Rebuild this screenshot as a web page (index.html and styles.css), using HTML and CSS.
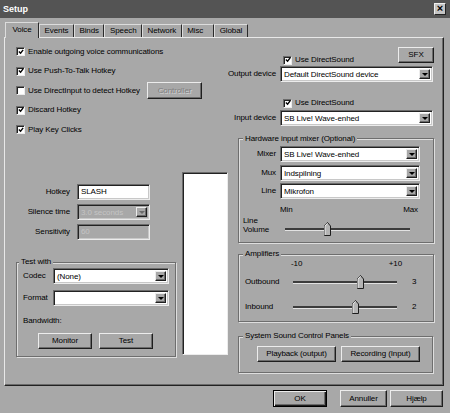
FILE: index.html
```html
<!DOCTYPE html>
<html lang="en">
<head>
    <meta charset="UTF-8">
    <title>Setup</title>
    <link rel="stylesheet" href="styles.css">
</head>
<body>
<div class="window">
    <div class="titlebar">
        <span class="title">Setup</span>
        <span class="close-btn">×</span>
    </div>

    <div class="tabs">
        <span class="tab active">Voice</span>
        <span class="tab">Events</span>
        <span class="tab">Binds</span>
        <span class="tab">Speech</span>
        <span class="tab">Network</span>
        <span class="tab misc">Misc</span>
        <span class="tab">Global</span>
    </div>

    <div class="panel">
        <!-- left side: options, hotkey, test -->
        <div class="col-left">
            <div class="check-row"><span class="cb"><svg class="tick" viewBox="0 0 7 7"><path d="M1 3l2 2 3-4"/></svg></span>Enable outgoing voice communications</div>
            <div class="check-row"><span class="cb"><svg class="tick" viewBox="0 0 7 7"><path d="M1 3l2 2 3-4"/></svg></span>Use Push-To-Talk Hotkey</div>
            <div class="check-row"><span class="cb"></span>Use DirectInput to detect Hotkey<span class="btn disabled controller">Controller</span></div>
            <div class="check-row"><span class="cb"><svg class="tick" viewBox="0 0 7 7"><path d="M1 3l2 2 3-4"/></svg></span>Discard Hotkey</div>
            <div class="check-row"><span class="cb"><svg class="tick" viewBox="0 0 7 7"><path d="M1 3l2 2 3-4"/></svg></span>Play Key Clicks</div>

            <div class="lower">
                <div class="lower-inner">
                    <div class="form-grid">
                        <span class="lbl">Hotkey</span>
                        <span class="edit">SLASH</span>
                        <span class="lbl">Silence time</span>
                        <span class="select disabled"><span class="val">3.0 seconds</span><span class="drop"></span></span>
                        <span class="lbl">Sensitivity</span>
                        <span class="edit disabled">60</span>
                    </div>

                    <fieldset class="group test-group">
                        <legend>Test with</legend>
                        <div class="codec-grid">
                            <span>Codec</span>
                            <span class="select"><span class="val">(None)</span><span class="drop"></span></span>
                            <span>Format</span>
                            <span class="select"><span class="val"></span><span class="drop"></span></span>
                        </div>
                        <div class="bandwidth">Bandwidth:</div>
                        <div class="btn-row">
                            <span class="btn">Monitor</span>
                            <span class="btn">Test</span>
                        </div>
                    </fieldset>
                </div>
                <div class="whitebox"></div>
            </div>
        </div>

        <!-- right side: devices and mixers -->
        <div class="col-right">
            <div class="device-grid">
                <span></span>
                <div class="sfx-row">
                    <span class="check-inline"><span class="cb"><svg class="tick" viewBox="0 0 7 7"><path d="M1 3l2 2 3-4"/></svg></span>Use DirectSound</span>
                    <span class="btn sfx">SFX</span>
                </div>
                <span class="lbl">Output device</span>
                <span class="select"><span class="val">Default DirectSound device</span><span class="drop"></span></span>
                <span></span>
                <span class="check-inline second"><span class="cb"><svg class="tick" viewBox="0 0 7 7"><path d="M1 3l2 2 3-4"/></svg></span>Use DirectSound</span>
                <span class="lbl input-lbl">Input device</span>
                <span class="select input-sel"><span class="val">SB Live! Wave-enhed</span><span class="drop"></span></span>
            </div>

            <fieldset class="group mixer-group">
                <legend>Hardware input mixer (Optional)</legend>
                <div class="mixer-grid">
                    <span class="lbl">Mixer</span>
                    <span class="select"><span class="val">SB Live! Wave-enhed</span><span class="drop"></span></span>
                    <span class="lbl">Mux</span>
                    <span class="select"><span class="val">Indspilning</span><span class="drop"></span></span>
                    <span class="lbl">Line</span>
                    <span class="select"><span class="val">Mikrofon</span><span class="drop"></span></span>
                </div>
                <div class="minmax"><span>Min</span><span>Max</span></div>
                <div class="volume-row">
                    <span class="volume-lbl">Line<br>Volume</span>
                    <div class="slider line-slider">
                        <div class="track"></div>
                        <svg class="thumb" style="left: 34%" viewBox="0 0 7 14"><path class="thumb-body" d="M0.5 13.5V4L3.5 0.5L6.5 4V13.5Z"/><path class="thumb-hi" d="M1 13V4.2L3.5 1.2"/></svg>
                    </div>
                </div>
            </fieldset>

            <fieldset class="group amp-group">
                <legend>Amplifiers</legend>
                <div class="scale"><span>-10</span><span>+10</span></div>
                <div class="amp-row">
                    <span class="amp-lbl">Outbound</span>
                    <div class="slider amp-slider">
                        <div class="track"></div>
                        <svg class="thumb" style="left: 65%" viewBox="0 0 7 14"><path class="thumb-body" d="M0.5 13.5V4L3.5 0.5L6.5 4V13.5Z"/><path class="thumb-hi" d="M1 13V4.2L3.5 1.2"/></svg>
                    </div>
                    <span class="amp-val">3</span>
                </div>
                <div class="amp-row inbound">
                    <span class="amp-lbl">Inbound</span>
                    <div class="slider amp-slider">
                        <div class="track"></div>
                        <svg class="thumb" style="left: 60%" viewBox="0 0 7 14"><path class="thumb-body" d="M0.5 13.5V4L3.5 0.5L6.5 4V13.5Z"/><path class="thumb-hi" d="M1 13V4.2L3.5 1.2"/></svg>
                    </div>
                    <span class="amp-val">2</span>
                </div>
            </fieldset>

            <fieldset class="group sys-group">
                <legend>System Sound Control Panels</legend>
                <div class="sys-buttons">
                    <span class="btn">Playback (output)</span>
                    <span class="btn">Recording (Input)</span>
                </div>
            </fieldset>
        </div>
    </div>

    <div class="footer">
        <span class="btn default">OK</span>
        <span class="btn cancel">Annuller</span>
        <span class="btn help">Hjælp</span>
    </div>
</div>
</body>
</html>
```

FILE: styles.css
```css
* {
    box-sizing: border-box;
}

body {
    margin: 0;
    background: #a8a8a8;
    font-family: "Liberation Sans", Arial, sans-serif;
    font-size: 8px;
    letter-spacing: -0.1px;
    line-height: 10px;
    color: #000;
}

.window {
    width: 450px;
    height: 413px;
    background: #a8a8a8;
    display: flex;
    flex-direction: column;
    overflow: hidden;
}

/* title bar */
.titlebar {
    height: 18px;
    flex: none;
    background: #545454;
    display: flex;
    align-items: center;
    justify-content: space-between;
    padding: 0 4px 0 3px;
}

.title {
    color: #fff;
    font-weight: bold;
    font-size: 9px;
    letter-spacing: 0;
}

.close-btn {
    width: 12px;
    height: 12px;
    background: #c4c4c4;
    border: 1px solid;
    border-color: #f0f0f0 #222 #222 #f0f0f0;
    font-weight: bold;
    font-size: 11px;
    line-height: 9px;
    text-align: center;
    letter-spacing: 0;
}

/* tabs */
.tabs {
    display: flex;
    align-items: flex-end;
    height: 15px;
    margin-top: 4px;
    padding-left: 5px;
    flex: none;
}

.tab {
    height: 13px;
    padding: 0 4.5px;
    border: 1px solid;
    border-color: #dcdcdc #2a2a2a transparent #dcdcdc;
    border-bottom: none;
    line-height: 12px;
    white-space: nowrap;
}

.tab.active {
    height: 16px;
    padding: 0 6.5px;
    margin-bottom: -1px;
    background: #a8a8a8;
    position: relative;
    z-index: 1;
    line-height: 13px;
}

.tab.misc {
    padding-right: 10px;
}

/* main panel */
.panel {
    flex: none;
    height: 349px;
    margin: 0 6px 0 4px;
    border: 1px solid;
    border-color: #e8e8e8 #222 #222 #e8e8e8;
    box-shadow: inset -1px -1px 0 #6b6b6b;
    display: flex;
}

.col-left {
    width: 228px;
    flex: none;
    padding-top: 4px;
}

.col-right {
    flex: 1;
    padding-top: 9px;
}

/* checkboxes */
.check-row {
    height: 19.5px;
    display: flex;
    align-items: center;
    padding-left: 11px;
    white-space: nowrap;
}

.cb {
    width: 9px;
    height: 9px;
    flex: none;
    margin-right: 3px;
    background: #fff;
    border: 1px solid;
    border-color: #6b6b6b #ececec #ececec #6b6b6b;
    box-shadow: inset 1px 1px 0 #222;
    display: flex;
    align-items: center;
    justify-content: center;
}

.tick {
    width: 6px;
    height: 6px;
    fill: none;
    stroke: #000;
    stroke-width: 1.6;
}

.check-inline {
    display: flex;
    align-items: center;
    height: 10px;
    margin-left: 3px;
    white-space: nowrap;
}

/* buttons */
.btn {
    display: flex;
    align-items: center;
    justify-content: center;
    height: 17px;
    background: #a8a8a8;
    border: 1px solid;
    border-color: #ececec #1e1e1e #1e1e1e #ececec;
    box-shadow: inset -1px -1px 0 #6b6b6b;
    white-space: nowrap;
}

.btn.disabled {
    color: #7e7e7e;
    text-shadow: 1px 1px 0 #d4d4d4;
}

.controller {
    width: 55px;
    margin-left: 7px;
}

/* fields */
.edit,
.select {
    height: 16px;
    background: #fff;
    border: 1px solid;
    border-color: #6b6b6b #ececec #ececec #6b6b6b;
    box-shadow: inset 1px 1px 0 #222, inset -1px -1px 0 #c8c8c8;
    padding: 2px 2px 0 3px;
    white-space: nowrap;
    overflow: hidden;
}

.select {
    display: flex;
    padding: 2px 2px 2px 2px;
}

.select .val {
    flex: 1;
    padding-left: 1px;
    line-height: 11px;
    overflow: hidden;
}

.drop {
    width: 11px;
    flex: none;
    background: #a8a8a8;
    border: 1px solid;
    border-color: #ececec #1e1e1e #1e1e1e #ececec;
    box-shadow: inset -1px -1px 0 #6b6b6b;
    display: flex;
    align-items: center;
    justify-content: center;
}

.drop::after {
    content: "";
    border-left: 3px solid transparent;
    border-right: 3px solid transparent;
    border-top: 3px solid #000;
    margin-top: 1px;
}

.edit.disabled,
.select.disabled {
    background: #a8a8a8;
    color: #c4c4c4;
}

.select.disabled .drop::after {
    border-top-color: #6b6b6b;
}

/* lower left area */
.lower {
    display: flex;
    align-items: flex-start;
    margin-top: 32.5px;
}

.lower-inner {
    width: 171px;
    flex: none;
    padding-top: 12px;
}

.form-grid {
    display: grid;
    grid-template-columns: 65px 73px;
    column-gap: 7px;
    row-gap: 4px;
    align-items: center;
}

.lbl {
    display: flex;
    justify-content: flex-end;
    white-space: nowrap;
}

.whitebox {
    width: 46px;
    height: 183px;
    margin-left: 6px;
    background: #fff;
    border: 1px solid;
    border-color: #6b6b6b #ececec #ececec #6b6b6b;
    box-shadow: inset 1px 1px 0 #222;
}

/* group boxes */
.group {
    margin: 0;
    padding: 0;
    min-width: 0;
    border: 1px solid #6e6e6e;
    box-shadow: 1px 1px 0 #dedede, inset 1px 1px 0 #dedede;
}

.group legend {
    padding: 0 2px;
    line-height: 10px;
    background: #a8a8a8;
    white-space: nowrap;
}

.test-group {
    width: 160px;
    margin: 17px 0 0 11px;
    padding: 1px 6px 7px 6px;
}

.test-group legend {
    margin-left: -4px;
}

.codec-grid {
    display: grid;
    grid-template-columns: 30px 116px;
    row-gap: 6px;
    align-items: center;
}

.bandwidth {
    margin-top: 10px;
}

.btn-row {
    display: flex;
    justify-content: center;
    gap: 7px;
    margin-top: 7px;
    padding-right: 1px;
}

.btn-row .btn {
    width: 54px;
    height: 16px;
}

/* right side */
.device-grid {
    display: grid;
    grid-template-columns: 43px 153px;
    column-gap: 4px;
    align-items: center;
}

.sfx-row {
    display: flex;
    align-items: flex-start;
    height: 19px;
}

.sfx-row .check-inline {
    margin-top: 8px;
}

.sfx {
    width: 36px;
    height: 16px;
    margin-left: auto;
    margin-right: -1px;
}

.check-inline.second {
    margin-top: 16px;
}

.input-sel,
.input-lbl {
    margin-top: 2px;
}

.mixer-group {
    width: 196px;
    margin: 7.5px 0 0 5px;
    padding: 2.5px 0 6px 0;
}

.mixer-group legend,
.amp-group legend,
.sys-group legend {
    margin-left: 4px;
}

.mixer-grid {
    display: grid;
    grid-template-columns: 37px 140px;
    column-gap: 4px;
    row-gap: 2.5px;
    align-items: center;
}

.minmax {
    display: flex;
    justify-content: space-between;
    width: 138px;
    margin: 6px 0 0 41px;
}

.volume-row {
    display: flex;
    align-items: flex-start;
    margin-top: 1px;
}

.volume-lbl {
    width: 46px;
    padding-left: 4px;
    line-height: 9px;
}

.slider {
    position: relative;
    height: 14px;
}

.line-slider {
    width: 125px;
    margin-top: 6px;
}

.track {
    position: absolute;
    left: 0;
    right: 0;
    top: 6px;
    height: 3px;
    background: #3c3c3c;
    border-bottom: 1px solid #e2e2e2;
}

.thumb {
    position: absolute;
    top: 0;
    width: 7px;
    height: 14px;
    margin-left: -3.5px;
}

.thumb-body {
    fill: #b4b4b4;
    stroke: #1e1e1e;
    stroke-width: 1;
}

.thumb-hi {
    fill: none;
    stroke: #f0f0f0;
    stroke-width: 1;
}

.amp-group {
    width: 196px;
    margin: 6px 0 0 5px;
    padding: 0 0 7px 0;
}

.scale {
    display: flex;
    justify-content: space-between;
    width: 111px;
    margin-left: 52px;
}

.amp-row {
    display: flex;
    align-items: center;
    height: 14px;
    margin-top: 6px;
}

.amp-row.inbound {
    margin-top: 10.5px;
}

.amp-lbl {
    width: 54px;
    padding-left: 6px;
}

.amp-slider {
    width: 104px;
}

.amp-val {
    margin-left: 15px;
}

.sys-group {
    width: 195px;
    margin: 9.5px 0 0 5px;
    padding: 5px 0 10px 0;
}

.sys-buttons {
    display: flex;
    gap: 5px;
    margin-left: 18px;
}

.sys-buttons .btn {
    width: 79px;
    height: 16px;
}

/* dialog buttons */
.footer {
    display: flex;
    justify-content: flex-end;
    margin-top: 4px;
    padding-right: 7px;
}

.footer .btn {
    height: 17px;
}

.btn.default {
    width: 54px;
    margin-right: 13px;
    border-color: #000;
    box-shadow: inset 1px 1px 0 #ececec, inset -1px -1px 0 #1e1e1e, inset -2px -2px 0 #6b6b6b;
}

.btn.cancel {
    width: 47px;
    margin-right: 3px;
}

.btn.help {
    width: 53px;
}
```
